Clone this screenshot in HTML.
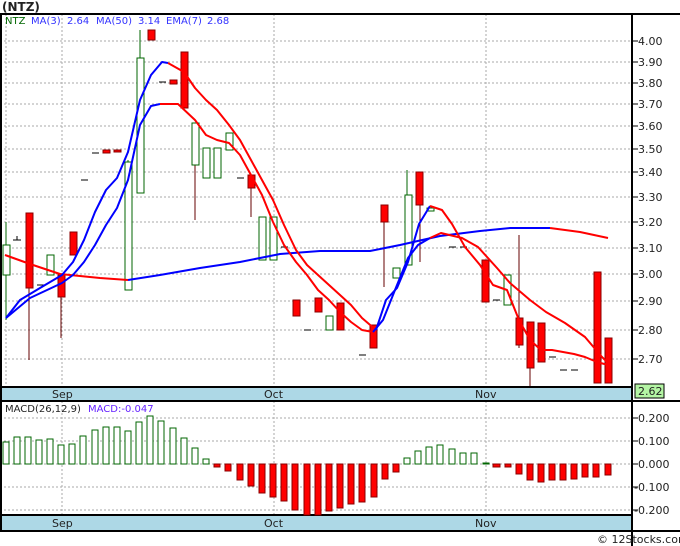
<!DOCTYPE html><html><head><style>body{margin:0;background:#fff}svg{display:block;font-family:"DejaVu Sans","Liberation Sans",sans-serif}</style></head><body>
<svg width="680" height="546" xmlns="http://www.w3.org/2000/svg">
<text x="2" y="11" font-size="12" font-weight="bold" fill="#222">(NTZ)</text>
<g stroke="#aaa" stroke-dasharray="2,2" stroke-width="1">
<line x1="0" y1="41" x2="632" y2="41"/><line x1="0" y1="62" x2="632" y2="62"/><line x1="0" y1="83" x2="632" y2="83"/><line x1="0" y1="104" x2="632" y2="104"/><line x1="0" y1="126" x2="632" y2="126"/><line x1="0" y1="149" x2="632" y2="149"/><line x1="0" y1="172" x2="632" y2="172"/><line x1="0" y1="197" x2="632" y2="197"/><line x1="0" y1="222" x2="632" y2="222"/><line x1="0" y1="248" x2="632" y2="248"/><line x1="0" y1="274" x2="632" y2="274"/><line x1="0" y1="301" x2="632" y2="301"/><line x1="0" y1="330" x2="632" y2="330"/><line x1="0" y1="359" x2="632" y2="359"/>
<line x1="6" y1="14" x2="6" y2="387"/><line x1="62" y1="14" x2="62" y2="387"/><line x1="274" y1="14" x2="274" y2="387"/><line x1="486" y1="14" x2="486" y2="387"/>
<line x1="0" y1="418" x2="632" y2="418"/><line x1="0" y1="441" x2="632" y2="441"/><line x1="0" y1="464" x2="632" y2="464"/><line x1="0" y1="487" x2="632" y2="487"/><line x1="0" y1="510" x2="632" y2="510"/>
<line x1="62" y1="401" x2="62" y2="515"/><line x1="274" y1="401" x2="274" y2="515"/><line x1="486" y1="401" x2="486" y2="515"/>
</g>
<!-- wicks -->
<g stroke="#600" stroke-width="1">
<line x1="29" y1="213" x2="29" y2="360"/><line x1="61" y1="275" x2="61" y2="338"/><line x1="195" y1="165" x2="195" y2="220"/><line x1="251" y1="175" x2="251" y2="217"/><line x1="384" y1="205" x2="384" y2="287"/><line x1="519" y1="235" x2="519" y2="348"/><line x1="530" y1="322" x2="530" y2="387"/><line x1="420" y1="180" x2="420" y2="262"/>
</g>
<g stroke="#060" stroke-width="1"><line x1="6" y1="222" x2="6" y2="320"/><line x1="140" y1="30" x2="140" y2="58"/><line x1="407" y1="170" x2="407" y2="195"/><line x1="128" y1="160" x2="128" y2="170"/></g>
<g fill="#fff" stroke="#060" stroke-width="1">
<rect x="3" y="245" width="7" height="30"/><rect x="47" y="255" width="7" height="20"/><rect x="125" y="162" width="7" height="128"/><rect x="137" y="58" width="7" height="135"/><rect x="192" y="123" width="7" height="42"/><rect x="203" y="148" width="7" height="30"/><rect x="214" y="148" width="7" height="30"/><rect x="226" y="133" width="7" height="17"/><rect x="259" y="217" width="7" height="43"/><rect x="270" y="217" width="7" height="43"/><rect x="326" y="316" width="7" height="14"/><rect x="393" y="268" width="7" height="10"/><rect x="405" y="195" width="7" height="70"/><rect x="504" y="275" width="7" height="30"/><rect x="427" y="208" width="7" height="3"/>
</g>
<g fill="#f00" stroke="#800" stroke-width="1">
<rect x="26" y="213" width="7" height="75"/><rect x="58" y="275" width="7" height="22"/><rect x="70" y="232" width="7" height="23"/><rect x="103" y="150" width="7" height="3"/><rect x="114" y="150" width="7" height="2"/><rect x="148" y="30" width="7" height="10"/><rect x="170" y="80" width="7" height="4"/><rect x="181" y="52" width="7" height="56"/><rect x="248" y="175" width="7" height="13"/><rect x="293" y="300" width="7" height="16"/><rect x="315" y="298" width="7" height="14"/><rect x="337" y="303" width="7" height="27"/><rect x="370" y="325" width="7" height="23"/><rect x="381" y="205" width="7" height="17"/><rect x="416" y="172" width="7" height="33"/><rect x="482" y="260" width="7" height="42"/><rect x="516" y="318" width="7" height="27"/><rect x="527" y="322" width="7" height="46"/><rect x="538" y="323" width="7" height="39"/><rect x="594" y="272" width="7" height="111"/><rect x="605" y="338" width="7" height="45"/>
</g>
<g stroke="#000" stroke-width="1">
<line x1="13" y1="240" x2="21" y2="240"/><line x1="17" y1="236" x2="17" y2="240"/><line x1="37" y1="285" x2="44" y2="285"/><line x1="81" y1="180" x2="88" y2="180"/><line x1="92" y1="153" x2="99" y2="153"/><line x1="159" y1="82" x2="166" y2="82"/><line x1="237" y1="178" x2="244" y2="178"/><line x1="281" y1="247" x2="288" y2="247"/><line x1="304" y1="330" x2="311" y2="330"/><line x1="359" y1="355" x2="366" y2="355"/><line x1="449" y1="247" x2="456" y2="247"/><line x1="460" y1="247" x2="467" y2="247"/><line x1="493" y1="300" x2="500" y2="300"/><line x1="549" y1="357" x2="556" y2="357"/><line x1="560" y1="370" x2="567" y2="370"/><line x1="571" y1="370" x2="578" y2="370"/>
</g>
<g fill="none" stroke-width="2" stroke-linejoin="round">
<polyline stroke="#f00" points="5,255 30,264 60,274 100,278 128,280"/>
<polyline stroke="#00f" points="128,280 160,275 200,268 240,262 280,254 320,251 370,251 400,245 440,236 480,231 510,228 550,228"/>
<polyline stroke="#f00" points="550,228 580,232 608,238"/>
<polyline stroke="#00f" points="6,318 20,300 40,288 62,275 73,262 84,240 95,212 106,190 117,178 128,152 140,100 151,75 162,62 168,63"/>
<polyline stroke="#f00" points="168,63 184,72 195,88 206,100 217,110 229,125 240,140 251,160 262,180 273,200 284,225 296,250 307,265 318,275 329,285 340,295 351,305 362,318 376,330"/>
<polyline stroke="#00f" points="376,330 386,300 397,288 408,262 419,224 430,206"/>
<polyline stroke="#f00" points="430,206 442,210 452,224 465,247 480,265 493,285 507,290 519,320 530,340 541,350 552,350 563,352 574,354 585,357 597,362 608,365"/>
<polyline stroke="#00f" points="6,318 30,298 62,283 73,275 84,262 95,245 106,225 117,208 128,180 140,125 151,106 160,104"/>
<polyline stroke="#f00" points="160,104 178,104 195,120 206,135 217,140 229,143 240,155 251,175 262,195 273,222 284,245 296,262 307,275 318,290 329,300 340,312 351,322 362,330 373,332"/>
<polyline stroke="#00f" points="373,332 383,320 395,290 408,258 418,245 430,238"/>
<polyline stroke="#f00" points="430,238 441,233 462,238 478,247 497,268 510,283 530,300 546,312 565,323 585,337 602,357 608,363"/>
</g>
<rect x="0" y="387" width="632" height="14" fill="#add8e6"/>
<rect x="0" y="515" width="632" height="16" fill="#add8e6"/>
<g font-size="11" fill="#222"><text x="52" y="398">Sep</text><text x="264" y="398">Oct</text><text x="475" y="398">Nov</text><text x="52" y="527">Sep</text><text x="264" y="527">Oct</text><text x="475" y="527">Nov</text></g>
<g stroke="#000" stroke-width="2" fill="none"><line x1="0" y1="14" x2="680" y2="14"/><line x1="632" y1="14" x2="632" y2="546"/><line x1="0" y1="387" x2="632" y2="387"/><line x1="0" y1="401" x2="680" y2="401"/><line x1="0" y1="515" x2="632" y2="515"/><line x1="0" y1="531" x2="680" y2="531"/><line x1="1" y1="14" x2="1" y2="531"/></g>
<g stroke="#000" stroke-width="1">
<line x1="632" y1="41" x2="638" y2="41"/><line x1="632" y1="62" x2="638" y2="62"/><line x1="632" y1="83" x2="638" y2="83"/><line x1="632" y1="104" x2="638" y2="104"/><line x1="632" y1="126" x2="638" y2="126"/><line x1="632" y1="149" x2="638" y2="149"/><line x1="632" y1="172" x2="638" y2="172"/><line x1="632" y1="197" x2="638" y2="197"/><line x1="632" y1="222" x2="638" y2="222"/><line x1="632" y1="248" x2="638" y2="248"/><line x1="632" y1="274" x2="638" y2="274"/><line x1="632" y1="301" x2="638" y2="301"/><line x1="632" y1="330" x2="638" y2="330"/><line x1="632" y1="359" x2="638" y2="359"/>
<line x1="632" y1="418" x2="638" y2="418"/><line x1="632" y1="441" x2="638" y2="441"/><line x1="632" y1="464" x2="638" y2="464"/><line x1="632" y1="487" x2="638" y2="487"/><line x1="632" y1="510" x2="638" y2="510"/>
</g>
<g font-size="11" fill="#222">
<text x="638" y="45">4.00</text><text x="638" y="66">3.90</text><text x="638" y="87">3.80</text><text x="638" y="108">3.70</text><text x="638" y="130">3.60</text><text x="638" y="153">3.50</text><text x="638" y="176">3.40</text><text x="638" y="201">3.30</text><text x="638" y="226">3.20</text><text x="638" y="252">3.10</text><text x="638" y="278">3.00</text><text x="638" y="305">2.90</text><text x="638" y="334">2.80</text><text x="638" y="363">2.70</text>
<text x="638" y="422">0.200</text><text x="638" y="445">0.100</text><text x="638" y="468">0.000</text><text x="634" y="491">-0.100</text><text x="634" y="514">-0.200</text>
</g>
<rect x="635" y="384" width="29" height="14" fill="#b4f5a4" stroke="#000"/>
<text x="638" y="395" font-size="11" fill="#222">2.62</text>
<g font-size="10"><text x="5" y="24" fill="#060">NTZ</text><text x="31" y="24" fill="#33f">MA(3)</text><text x="67" y="24" fill="#33f">2.64</text><text x="96" y="24" fill="#33f">MA(50)</text><text x="138" y="24" fill="#33f">3.14</text><text x="166" y="24" fill="#33f">EMA(7)</text><text x="207" y="24" fill="#33f">2.68</text>
<text x="5" y="412" fill="#222">MACD(26,12,9)</text><text x="88" y="412" fill="#62f">MACD:-0.047</text></g>
<g fill="#fff" stroke="#060" stroke-width="1">
<rect x="3" y="442" width="6" height="22"/><rect x="14" y="437" width="6" height="27"/><rect x="25" y="437" width="6" height="27"/><rect x="36" y="440" width="6" height="24"/><rect x="47" y="439" width="6" height="25"/><rect x="58" y="445" width="6" height="19"/><rect x="69" y="444" width="6" height="20"/><rect x="80" y="436" width="6" height="28"/><rect x="92" y="430" width="6" height="34"/><rect x="103" y="427" width="6" height="37"/><rect x="114" y="427" width="6" height="37"/><rect x="125" y="431" width="6" height="33"/><rect x="136" y="422" width="6" height="42"/><rect x="147" y="416" width="6" height="48"/><rect x="158" y="421" width="6" height="43"/><rect x="170" y="428" width="6" height="36"/><rect x="181" y="438" width="6" height="26"/><rect x="192" y="448" width="6" height="16"/><rect x="203" y="459" width="6" height="5"/>
<rect x="404" y="458" width="6" height="6"/><rect x="415" y="451" width="6" height="13"/><rect x="426" y="447" width="6" height="17"/><rect x="437" y="445" width="6" height="19"/><rect x="449" y="449" width="6" height="15"/><rect x="460" y="453" width="6" height="11"/><rect x="471" y="453" width="6" height="11"/><rect x="483" y="463" width="6" height="1"/>
</g>
<g fill="#f00" stroke="#800" stroke-width="1">
<rect x="214" y="464" width="6" height="3"/><rect x="225" y="464" width="6" height="7"/><rect x="237" y="464" width="6" height="16"/><rect x="248" y="464" width="6" height="22"/><rect x="259" y="464" width="6" height="29"/><rect x="270" y="464" width="6" height="33"/><rect x="281" y="464" width="6" height="37"/><rect x="292" y="464" width="6" height="46"/><rect x="304" y="464" width="6" height="51"/><rect x="315" y="464" width="6" height="51"/><rect x="326" y="464" width="6" height="47"/><rect x="337" y="464" width="6" height="44"/><rect x="348" y="464" width="6" height="40"/><rect x="359" y="464" width="6" height="38"/><rect x="371" y="464" width="6" height="33"/><rect x="382" y="464" width="6" height="15"/><rect x="393" y="464" width="6" height="8"/>
<rect x="493" y="464" width="7" height="3"/><rect x="505" y="464" width="6" height="3"/><rect x="516" y="464" width="6" height="10"/><rect x="527" y="464" width="6" height="16"/><rect x="538" y="464" width="6" height="18"/><rect x="549" y="464" width="6" height="16"/><rect x="560" y="464" width="6" height="16"/><rect x="571" y="464" width="6" height="15"/><rect x="582" y="464" width="6" height="13"/><rect x="593" y="464" width="6" height="13"/><rect x="605" y="464" width="6" height="11"/>
</g>
<text x="597" y="543" font-size="11" fill="#222">© 12Stocks.com</text>
</svg></body></html>
